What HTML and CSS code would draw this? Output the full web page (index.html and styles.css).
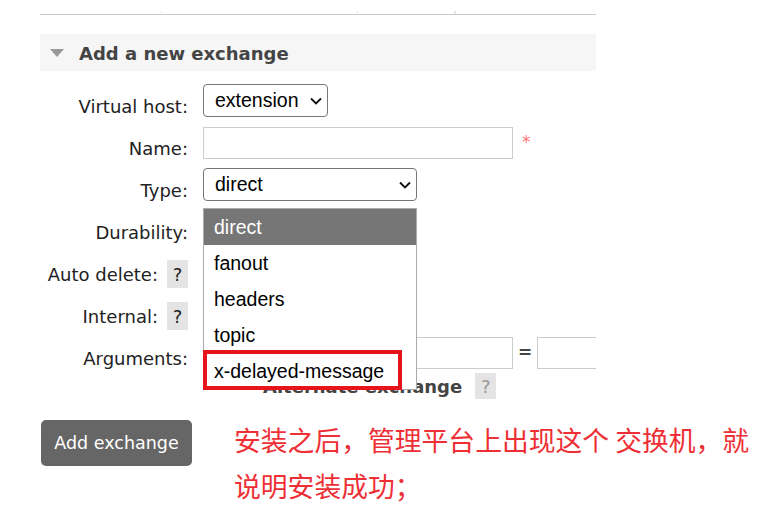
FILE: index.html
```html
<!DOCTYPE html>
<html lang="en">
<head>
  <meta charset="UTF-8" />
  <meta name="viewport" content="width=device-width, initial-scale=1.0"/>
  <title>Exchanges</title>
  <link rel="stylesheet" href="styles.css">
</head>
<body>
  <div class="page">
    <div class="prev-table">
      <span class="cell" style="width:121px"></span>
      <span class="cell" style="width:195px"></span>
      <span class="cell" style="width:96px"></span>
      <span class="cell"></span>
    </div>

    <div class="section">
      <h2 class="section-title"><span class="arrow"></span>Add a new exchange</h2>

      <form class="form">
        <div class="row">
          <label class="row-label">Virtual host:</label>
          <div class="row-field">
            <div class="select select-vhost">
              <span>extension</span>
              <svg class="chevron" width="12" height="8" viewBox="0 0 12 8"><path d="M1 1.5l5 5 5-5" fill="none" stroke="#111" stroke-width="1.8"/></svg>
            </div>
          </div>
        </div>

        <div class="row">
          <label class="row-label">Name:</label>
          <div class="row-field">
            <input class="input" type="text" />
            <span class="required">*</span>
          </div>
        </div>

        <div class="row">
          <label class="row-label">Type:</label>
          <div class="row-field">
            <div class="select select-type">
              <span>direct</span>
              <svg class="chevron" width="12" height="8" viewBox="0 0 12 8"><path d="M1 1.5l5 5 5-5" fill="none" stroke="#111" stroke-width="1.8"/></svg>
            </div>
          </div>
        </div>

        <div class="row">
          <label class="row-label">Durability:</label>
          <div class="row-field"></div>
        </div>

        <div class="row">
          <label class="row-label">Auto delete:<span class="help">?</span></label>
          <div class="row-field"></div>
        </div>

        <div class="row">
          <label class="row-label">Internal:<span class="help">?</span></label>
          <div class="row-field"></div>
        </div>

        <div class="row">
          <label class="row-label">Arguments:</label>
          <div class="row-field row-field-args">
            <input class="input" type="text" />
            <span class="equals">=</span>
            <input class="input input-value" type="text" />
          </div>
        </div>

        <div class="row-extra">
          <span class="add-link">Alternate exchange</span>
          <span class="help help-muted">?</span>
        </div>

        <!-- open type menu -->
        <div class="dropdown">
          <div class="option is-selected">direct</div>
          <div class="option">fanout</div>
          <div class="option">headers</div>
          <div class="option">topic</div>
          <div class="option">x-delayed-message</div>
        </div>
        <div class="mark"></div>
      </form>
    </div>

    <div class="footer">
      <button class="btn" type="button">Add exchange</button>
      <p class="note">安装之后，管理平台上出现这个 交换机，就<br>说明安装成功；</p>
    </div>
  </div>
</body>
</html>
```

FILE: styles.css
```css
body {
  margin: 0;
  font-family: "DejaVu Sans", Verdana, sans-serif;
  color: #222;
  background: #fff;
}

.page {
  padding-left: 40px;
}

.prev-table {
  width: 556px;
  height: 14px;
  display: flex;
  align-items: flex-end;
  border-bottom: 1px solid #ccc;
}

.prev-table .cell {
  height: 3px;
  border-right: 1px solid #e6e6e6;
}

.section {
  width: 556px;
  overflow: hidden;
  margin-top: 19px;
}

.section-title {
  margin: 0;
  height: 37px;
  padding: 1px 0 0 10px;
  box-sizing: border-box;
  background: #f6f6f6;
  display: flex;
  align-items: center;
  font-size: 18px;
  font-weight: bold;
  color: #444;
}

.arrow {
  width: 0;
  height: 0;
  border-left: 7.5px solid transparent;
  border-right: 7.5px solid transparent;
  border-top: 8px solid #999;
  margin-right: 15px;
}

.form {
  position: relative;
  margin: 9px 0 0;
}

.row {
  display: flex;
  height: 42px;
}

.row-label {
  flex-shrink: 0;
  width: 148px;
  height: 28px;
  margin-top: 12px;
  display: flex;
  justify-content: flex-end;
  align-items: center;
  font-size: 18px;
  line-height: 21px;
}

.row-field {
  margin-left: 15px;
  padding-top: 4px;
  display: flex;
  align-items: flex-start;
}

.select {
  box-sizing: border-box;
  height: 33px;
  border: 1px solid #767676;
  border-radius: 4px;
  background: #fff;
  display: flex;
  align-items: center;
  justify-content: space-between;
  padding: 0 5px 0 11px;
  font-family: "Liberation Sans", Arial, sans-serif;
  font-size: 19.5px;
  color: #000;
}

.select-vhost { width: 125px; }
.select-type { width: 214px; }

.input {
  box-sizing: border-box;
  width: 310px;
  height: 32px;
  margin: 1px 0 0;
  border: 1px solid #ccc;
  padding: 0 6px;
}

.required {
  margin: 6px 0 0 9px;
  color: #f77;
  font-size: 17px;
}

.row-field-args {
  margin-top: -1px;
  align-items: center;
  height: 34px;
}

.equals {
  margin: 0 5px;
  font-weight: bold;
  font-size: 17px;
  color: #444;
}

.input-value {
  width: 150px;
}

.help {
  display: inline-flex;
  align-items: center;
  justify-content: center;
  width: 21px;
  height: 28px;
  margin-left: 9px;
  background: #e4e4e4;
  color: #222;
  font-size: 18px;
}

.row-extra {
  display: flex;
  align-items: center;
  height: 26px;
  margin-top: -1px;
  padding-left: 223px;
}

.add-link {
  font-size: 18px;
  font-weight: bold;
  color: #444;
}

.help-muted {
  height: 26px;
  margin-left: 13px;
  color: #999;
}

/* open menu of the Type select */
.dropdown {
  position: absolute;
  left: 163px;
  top: 128px;
  width: 214px;
  box-sizing: border-box;
  border: 1px solid #aaa;
  background: #fff;
  font-family: "Liberation Sans", Arial, sans-serif;
  font-size: 19.5px;
  color: #000;
}

.option {
  height: 36px;
  line-height: 36px;
  padding-left: 10px;
}

.option.is-selected {
  background: #767676;
  color: #fff;
}

.mark {
  position: absolute;
  left: 163px;
  top: 270px;
  width: 199px;
  height: 40px;
  box-sizing: border-box;
  border: 4px solid #e8141c;
}

.footer {
  display: flex;
  align-items: flex-start;
  margin-top: 21px;
}

.btn {
  width: 151px;
  height: 46px;
  margin-left: 1px;
  border: none;
  border-radius: 5px;
  background: #666;
  color: #fff;
  font-family: "DejaVu Sans", Verdana, sans-serif;
  font-size: 17.5px;
}

.note {
  margin: -3px 0 0 42px;
  font-family: "Noto Sans CJK SC", sans-serif;
  font-size: 26.8px;
  line-height: 46px;
  color: #ee2f35;
  white-space: nowrap;
}
```
